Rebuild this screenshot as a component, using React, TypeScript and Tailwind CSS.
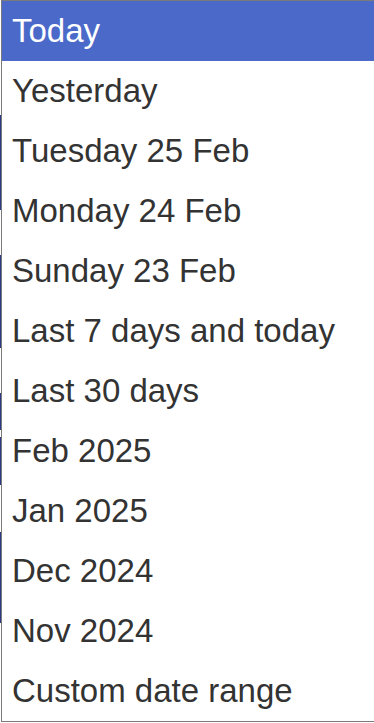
const items = [
  "Today",
  "Yesterday",
  "Tuesday 25 Feb",
  "Monday 24 Feb",
  "Sunday 23 Feb",
  "Last 7 days and today",
  "Last 30 days",
  "Feb 2025",
  "Jan 2025",
  "Dec 2024",
  "Nov 2024",
  "Custom date range",
]

export default function App() {
  return (
    <div className="flex h-[723px] w-[374px] overflow-hidden bg-white">
      {/* sliver of the page behind the list */}
      <div className="flex w-px shrink-0 flex-col">
        <div className="h-[115px] bg-white" />
        <div className="h-[95px] bg-[#2b3a86]" />
        <div className="h-[45px] bg-white" />
        <div className="h-[93px] bg-[#2b3a86]" />
        <div className="h-[45px] bg-white" />
        <div className="h-[37px] bg-[#2b3a86]" />
        <div className="h-[7px] bg-white" />
        <div className="h-[48px] bg-[#2b3a86]" />
        <div className="h-[47px] bg-white" />
        <div className="h-[91px] bg-[#2b3a86]" />
        <div className="flex-1 bg-white" />
      </div>
      <ul
        className="flex h-[722px] flex-1 flex-col border-y border-l border-[#7a7a7a] text-[33px] leading-[60px] text-[#333333]"
        style={{ fontFamily: '"Liberation Sans", Arial, sans-serif' }}
      >
        {items.map((item, i) => (
          <li
            key={item}
            className={
              i === 0
                ? "h-[60px] whitespace-nowrap bg-[#4a69c9] pl-[10px] text-white"
                : "h-[60px] whitespace-nowrap pl-[10px]"
            }
          >
            {item}
          </li>
        ))}
      </ul>
    </div>
  )
}
